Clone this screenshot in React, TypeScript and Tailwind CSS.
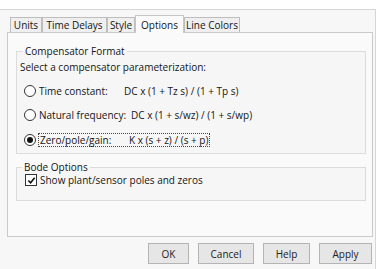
import React from "react";

const tabs = [
  { label: "Units", w: "w-[32px]" },
  { label: "Time Delays", w: "w-[65px]" },
  { label: "Style", w: "w-[28px]" },
  { label: "Options", w: "w-[49px]", active: true },
  { label: "Line Colors", w: "w-[56px]" },
];

function Radio({ checked }: { checked?: boolean }) {
  return (
    <span className="flex h-[12px] w-[12px] shrink-0 items-center justify-center rounded-full border border-[#333] bg-white">
      {checked && <span className="h-[6px] w-[6px] rounded-full bg-[#111]" />}
    </span>
  );
}

export default function App() {
  return (
    <div className="h-[269px] w-[389px] overflow-hidden whitespace-nowrap bg-white font-['Open_Sans',sans-serif] text-[10px] text-[#151515]">
      <div className="mt-[9px] h-[260px] w-[376px] border-t border-r border-[#d6d6d6] bg-[#f7f7f7] pt-[5px]">
        {/* tab strip */}
        <div className="ml-[10px] flex h-[17px] items-end">
          {tabs.map((t) =>
            t.active ? (
              <div
                key={t.label}
                className={`${t.w} relative z-10 -mb-px flex h-[18px] items-center justify-center border border-b-0 border-[#c6c6c6] bg-[#fbfbfb] leading-none`}
              >
                {t.label}
              </div>
            ) : (
              <div
                key={t.label}
                className={`${t.w} flex h-[15px] items-center justify-center border border-b-0 border-[#bdbdbd] bg-[#efefef] leading-none`}
              >
                {t.label}
              </div>
            )
          )}
        </div>

        {/* tab page */}
        <div className="ml-[7px] h-[205px] w-[366px] border border-[#cacaca] bg-[#fafafa]">
          <fieldset className="ml-[8px] mt-[10px] h-[111px] w-[350px] border border-[#dcdcdc] bg-[#f6f6f6] px-[3px]">
            <legend className="ml-[3px] px-[2px] leading-[16px]">Compensator Format</legend>
            <div className="leading-[16px]">Select a compensator parameterization:</div>

            <div className="mt-[8px] flex h-[16px] items-center">
              <span className="ml-[4px]"><Radio /></span>
              <span className="ml-[3px] w-[85px] leading-[16px]">Time constant:</span>
              <span className="leading-[16px]">DC x (1 + Tz s) / (1 + Tp s)</span>
            </div>
            <div className="mt-[8px] flex h-[16px] items-center">
              <span className="ml-[4px]"><Radio /></span>
              <span className="ml-[3px] w-[92px] leading-[16px]">Natural frequency:</span>
              <span className="leading-[16px]">DC x (1 + s/wz) / (1 + s/wp)</span>
            </div>
            <div className="mt-[10px] flex h-[14px] items-center">
              <span className="ml-[4px]"><Radio checked /></span>
              <span className="ml-[2px] flex h-[14px] items-center border border-dotted border-[#444]">
                <span className="w-[90px] pl-px leading-[12px]">Zero/pole/gain:</span>
                <span className="pr-px leading-[12px]">K x (s + z) / (s + p)</span>
              </span>
            </div>
          </fieldset>

          <fieldset className="ml-[8px] mt-[7px] h-[40px] w-[350px] border border-[#dcdcdc] bg-[#f6f6f6] px-[3px]">
            <legend className="ml-[2px] px-[2px] leading-[12px]">Bode Options</legend>
            <div className="flex h-[14px] items-center">
              <span className="ml-[5px] flex h-[12px] w-[12px] items-center justify-center border border-[#333] bg-white">
                <svg viewBox="0 0 10 10" className="h-[9px] w-[9px]">
                  <path d="M1.5 5 L4 7.5 L8.5 2" fill="none" stroke="#111" strokeWidth="1.8" />
                </svg>
              </span>
              <span className="ml-[3px] leading-[14px]">Show plant/sensor poles and zeros</span>
            </div>
          </fieldset>
        </div>

        {/* buttons */}
        <div className="mt-[6px] flex justify-end gap-[9px] pr-[3px]">
          {[
            ["OK", "w-[41px]"],
            ["Cancel", "w-[56px]"],
            ["Help", "w-[47px]"],
            ["Apply", "w-[53px]"],
          ].map(([label, w]) => (
            <button
              key={label}
              className={`${w} flex h-[21px] items-center justify-center border border-[#b4b4b4] bg-[#e6e6e6] leading-none text-[#222]`}
            >
              {label}
            </button>
          ))}
        </div>
      </div>
    </div>
  );
}
